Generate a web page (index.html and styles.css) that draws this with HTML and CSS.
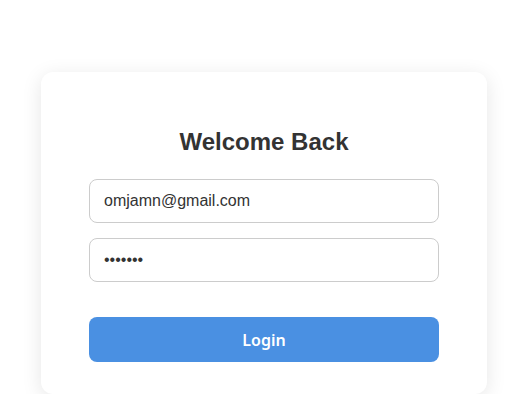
FILE: index.html
```html
<!DOCTYPE html>
<html lang="en">
<head>
<meta charset="utf-8">
<title>Login</title>
<link rel="stylesheet" href="styles.css">
</head>
<body>
<main class="page">
  <form class="card">
    <h2 class="title">Welcome Back</h2>
    <div class="fields">
      <input class="field" type="email" value="omjamn@gmail.com">
      <input class="field" type="password" value="1234567">
    </div>
    <button class="btn" type="button">Login</button>
  </form>
</main>
</body>
</html>
```

FILE: styles.css
```css
html, body {
  margin: 0;
  padding: 0;
  background: #ffffff;
}
.page {
  display: flex;
  justify-content: center;
  padding: 72px 0 0 20px;
}
.card {
  width: 446px;
  box-sizing: border-box;
  background: #ffffff;
  border-radius: 12px;
  box-shadow: 0 4px 20px rgba(0, 0, 0, 0.1);
  padding: 56px 48px 32px;
  display: flex;
  flex-direction: column;
}
.title {
  margin: 0;
  font-family: "Liberation Sans", Arial, sans-serif;
  font-size: 24px;
  font-weight: bold;
  color: #333333;
  text-align: center;
  line-height: 27px;
}
.fields {
  display: flex;
  flex-direction: column;
  gap: 15px;
  margin-top: 24px;
}
.field {
  display: block;
  width: 100%;
  height: 44px;
  box-sizing: border-box;
  border: 1px solid #cccccc;
  border-radius: 8px;
  padding: 0 14px;
  font-family: "Liberation Sans", Arial, sans-serif;
  font-size: 16px;
  color: #333333;
  background: #ffffff;
  outline: none;
}
.btn {
  margin-top: 35px;
  height: 45px;
  width: 100%;
  border: none;
  border-radius: 8px;
  background: #4a90e2;
  color: #ffffff;
  font-family: "Noto Sans", "Open Sans", sans-serif;
  font-size: 16px;
  font-weight: 600;
  cursor: pointer;
}
```
